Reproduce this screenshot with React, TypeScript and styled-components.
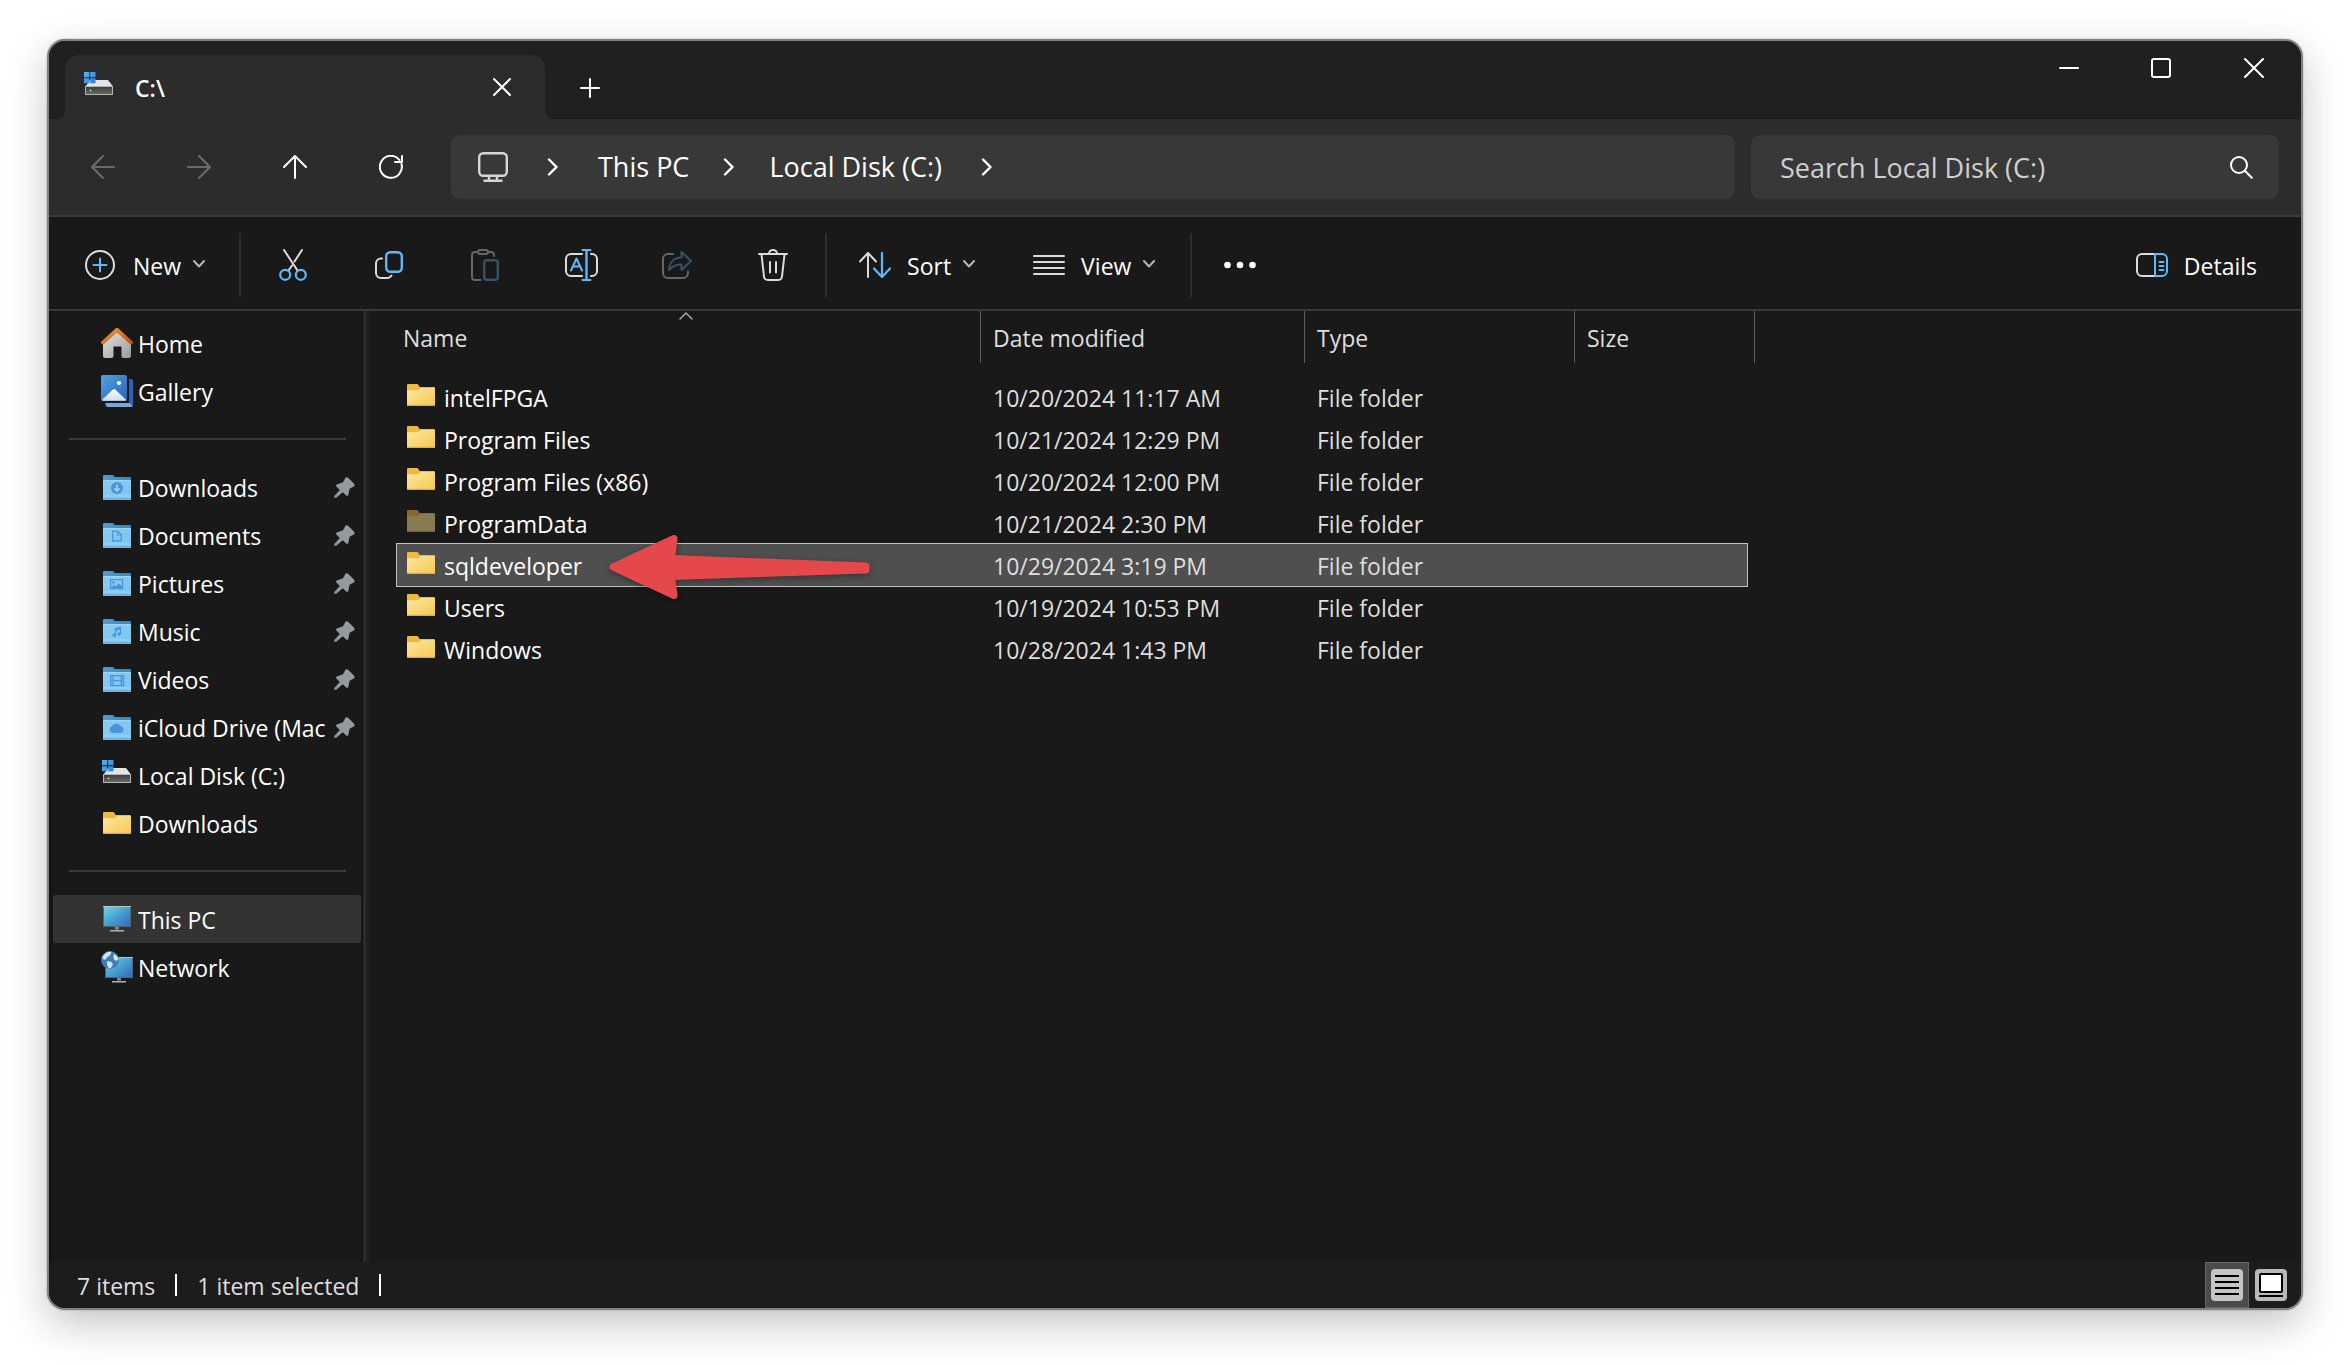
import React from "react";
import styled, { createGlobalStyle } from "styled-components";

const FONT = '"Open Sans", "Noto Sans", sans-serif';
const ACCENT = "#62b7f8";
const LINE = "#dcdcdc";

const GlobalStyle = createGlobalStyle`
  *, *::before, *::after { box-sizing: border-box; }
  body { margin: 0; background: #fff; font-family: ${FONT}; color: #fff; }
  button, input { font: inherit; color: inherit; background: none; border: 0; padding: 0; margin: 0; }
  a { color: inherit; text-decoration: none; }
  svg { display: block; flex: none; }
`;

const Page = styled.div`
  min-height: 100vh;
  display: flex;
  padding: 39px 47px 54px;
`;

const Window = styled.main`
  flex: 1;
  min-width: 0;
  display: flex;
  flex-direction: column;
  overflow: hidden;
  border: 2px solid #808080;
  border-radius: 18px;
  background: #191919;
  box-shadow: 0 0 2px rgba(0, 0, 0, 0.3), 0 14px 40px rgba(0, 0, 0, 0.23);
  font-size: 23px;
  line-height: 32px;
`;

const TitleBar = styled.header`
  display: flex;
  height: 78px;
  padding-left: 16px;
  background: #202020;
  border-bottom: 1px solid #1c1c1c;
`;

const Tab = styled.div`
  position: relative;
  display: flex;
  align-items: center;
  width: 480px;
  height: 64px;
  margin-top: 14px;
  padding: 0 34px 0 19px;
  border-radius: 14px 14px 0 0;
  background: #2c2c2c;

  &::before, &::after {
    content: "";
    position: absolute;
    bottom: 0;
    width: 8px;
    height: 8px;
  }
  &::before { left: -8px; background: radial-gradient(circle at 0 0, #202020 8px, #2c2c2c 8px); }
  &::after { right: -8px; background: radial-gradient(circle at 100% 0, #202020 8px, #2c2c2c 8px); }
`;

const TabTitle = styled.span`
  flex: 1;
  padding: 2px 0 0 21px;
  font-weight: 600;
`;

const IconButton = styled.button<{ $w: number }>`
  display: flex;
  align-items: center;
  justify-content: center;
  width: ${(p) => p.$w}px;
  color: ${LINE};
  &:disabled { color: #6b6b6b; }
`;

const NewTabButton = styled(IconButton)`
  height: 64px;
  margin: 15px 0 0 12px;
`;

const WindowControls = styled.div`
  display: flex;
  height: 54px;
  margin-left: auto;
  color: #fff;
`;

const NavBar = styled.nav`
  display: flex;
  align-items: center;
  height: 98px;
  padding: 0 22px 0 6px;
  background: #2c2c2c;
  border-bottom: 2px solid #3a3a3a;
`;

const NavButtons = styled.div`
  display: flex;
  height: 64px;
`;

const AddressBar = styled.div`
  flex: 1;
  display: flex;
  align-items: center;
  height: 64px;
  margin: 0 16px 0 12px;
  padding-left: 27px;
  border-radius: 9px;
  background: #383838;
  font-size: 27px;
`;

const Crumb = styled.a`
  white-space: nowrap;
`;

const CrumbArrow = styled.span<{ $wide?: boolean }>`
  display: flex;
  justify-content: center;
  width: ${(p) => (p.$wide ? 90 : 80)}px;
`;

const SearchBox = styled.label`
  display: flex;
  align-items: center;
  flex: 0 1 528px;
  height: 64px;
  padding: 0 26px 0 29px;
  border-radius: 9px;
  background: #383838;
  font-size: 27px;
`;

const SearchInput = styled.input`
  flex: 1;
  min-width: 0;
  height: 48px;
  outline: 0;
  &::placeholder { color: #cfcfcf; opacity: 1; }
`;

const Toolbar = styled.div`
  display: flex;
  align-items: center;
  height: 94px;
  padding: 4px 44px 0 36px;
  border-bottom: 2px solid #3a3a3a;
`;

const MenuButton = styled.button`
  display: flex;
  align-items: center;
  height: 64px;
`;

const ViewMenu = styled(MenuButton)`
  margin-left: 58px;
`;

const MenuLabel = styled.span<{ $left: number; $right?: number }>`
  padding: 2px ${(p) => p.$right ?? 0}px 0 ${(p) => p.$left}px;
`;

const ToolSeparator = styled.span<{ $left: number; $right: number }>`
  width: 2px;
  height: 64px;
  margin: 0 ${(p) => p.$right}px 0 ${(p) => p.$left}px;
  background: #2d2d2d;
`;

const Spacer = styled.span`
  flex: 1;
`;

const Content = styled.div`
  flex: 1;
  display: flex;
  min-height: 0;
`;

const Sidebar = styled.aside`
  flex: none;
  width: 317px;
  padding-top: 8px;
  border-left: 4px solid #151515;
  border-right: 3px solid #2b2b2b;
  box-shadow: inset -2px 0 0 #141414, 3px 0 0 #1f1f1f;
`;

const Place = styled.a<{ $active?: boolean }>`
  display: flex;
  align-items: center;
  height: 48px;
  margin-right: 2px;
  padding: 0 6px 0 48px;
  border-radius: 2px;
  background: ${(p) => (p.$active ? "#333333" : "transparent")};
`;

const PlaceIcon = styled.span<{ $inset: number }>`
  display: flex;
  flex: none;
  width: 37px;
  padding-left: ${(p) => p.$inset}px;
`;

const PlaceName = styled.span`
  flex: 1;
  padding-top: 2px;
  overflow: hidden;
  white-space: nowrap;
`;

const PlaceRule = styled.hr`
  height: 2px;
  margin: 23px 17px 23px 16px;
  border: 0;
  background: #3a3a3a;
`;

const FilePane = styled.section`
  flex: 1;
  min-width: 0;
  padding-left: 31px;
`;

const FileTable = styled.table`
  display: block;
  thead, tbody { display: block; }
`;

const Row = styled.tr`
  display: grid;
  grid-template-columns: 584px 324px 270px 180px;
`;

const HeadRow = styled(Row)`
  margin-bottom: 13px;
`;

const HeadCell = styled.th`
  position: relative;
  height: 52px;
  padding: 11px 12px 0;
  border-right: 1px solid #5c5c5c;
  color: #dedede;
  font-weight: 400;
  text-align: left;
  &:first-child { padding-left: 6px; }
`;

const SortMark = styled.span`
  position: absolute;
  top: 1px;
  left: 282px;
`;

const FileRow = styled(Row)<{ $selected?: boolean }>`
  position: relative;
  width: 1350px;
  height: 42px;
  background: ${(p) => (p.$selected ? "#4f4f4f" : "transparent")};
  outline: ${(p) => (p.$selected ? "1px solid #c3c3c3" : "0")};
`;

const Cell = styled.td`
  padding: 6px 12px 0;
  color: #dedede;
  white-space: nowrap;
`;

const NameCell = styled(Cell)`
  display: flex;
  gap: 9px;
  padding-left: 10px;
  color: #fff;
  > svg { margin-top: 2px; }
`;

const Pointer = styled.span`
  position: absolute;
  left: 210px;
  top: -11px;
  filter: drop-shadow(0 2px 3px rgba(0, 0, 0, 0.35));
`;

const StatusBar = styled.footer`
  display: flex;
  align-items: center;
  height: 46px;
  padding: 0 8px 0 28px;
  background: #1c1c1c;
  color: #dedede;
`;

const StatusText = styled.span`
  padding-top: 2px;
`;

const StatusRule = styled.span`
  width: 2px;
  height: 22px;
  margin: 0 20px;
  background: #fff;
`;

const ViewButton = styled.button<{ $on?: boolean }>`
  display: flex;
  align-items: center;
  justify-content: center;
  width: 44px;
  height: 46px;
  border: 1px solid ${(p) => (p.$on ? "#666666" : "transparent")};
  background: ${(p) => (p.$on ? "#4b4b4b" : "transparent")};
`;

/* ---------- icons ---------- */

type StrokeProps = { w: number; h: number; sw?: number; color?: string; children: React.ReactNode };
const Stroke = ({ w, h, sw = 2, color = "currentColor", children }: StrokeProps) => (
  <svg width={w} height={h} viewBox={`0 0 ${w} ${h}`} fill="none" stroke={color} strokeWidth={sw} strokeLinecap="round" strokeLinejoin="round" aria-hidden="true">
    {children}
  </svg>
);

const Chevron = () => <Stroke w={12} h={10} sw={2} color="#b5b5b5"><path d="M1 1l5 5.500 5-5.500" /></Stroke>;
const CrumbChevron = () => <Stroke w={12} h={18} sw={2.4} color="#fff"><path d="M2 1.500l7.500 7.500L2 16.500" /></Stroke>;

const DriveIcon = () => (
  <svg width="30" height="30" viewBox="0 0 30 30" aria-hidden="true">
    <defs>
      <linearGradient id="driveFront" x1="0" y1="0" x2="0" y2="1">
        <stop offset="0" stopColor="#3b3b3b" /><stop offset="1" stopColor="#6a6a6a" />
      </linearGradient>
      <linearGradient id="driveLogo" x1="0" y1="0" x2="1" y2="1">
        <stop offset="0" stopColor="#5cb4f0" /><stop offset="1" stopColor="#2f7bd4" />
      </linearGradient>
    </defs>
    <path d="M6 8h18l5 6.500H1.500z" fill="#e3e4e8" />
    <rect x="1.500" y="14.500" width="27" height="8" fill="url(#driveFront)" stroke="#b4b4b4" />
    <path d="M6.500 17v3M5 18.500h3" stroke="#3fae2a" strokeWidth="1" />
    <rect x="6" y="18" width="1" height="1" fill="#8ff56a" />
    <path d="M0 0h5.300v5.300H0zM6.200 0h5.300v5.300H6.200zM0 6.200h5.300v5H0zM6.200 6.200h5.300v5H6.200z" fill="url(#driveLogo)" />
  </svg>
);

const FolderIcon = ({ faded }: { faded?: boolean }) => (
  <svg width="28" height="22" viewBox="0 0 28 22" opacity={faded ? 0.5 : 1} aria-hidden="true">
    <defs>
      <linearGradient id="folderFace" x1="0" y1="0" x2="1" y2="1">
        <stop offset="0" stopColor="#fde8a4" /><stop offset="1" stopColor="#f5c84f" />
      </linearGradient>
    </defs>
    <path d="M0 1a1 1 0 0 1 1-1h8.500c1 0 1.500.5 2 1.200L12.700 3H27a1 1 0 0 1 1 1v10H0z" fill="#efb93f" />
    <path d="M0 6.200h10c1 0 1.700-.3 2.400-1l1-.9c.4-.3.700-.3 1.100-.3H28v17a1 1 0 0 1-1 1H1a1 1 0 0 1-1-1z" fill={faded ? "#f7dc8c" : "url(#folderFace)"} />
    <path d="M.3 21.300h27.400" stroke="#d9a53a" strokeWidth="1" />
  </svg>
);

const BlueFolder = ({ children }: { children: React.ReactNode }) => (
  <svg width="28" height="25" viewBox="0 0 28 25" aria-hidden="true">
    <defs>
      <linearGradient id="blueFace" x1="0" y1="0" x2="1" y2="1">
        <stop offset="0" stopColor="#8accf3" /><stop offset="1" stopColor="#7cc3ee" />
      </linearGradient>
      <linearGradient id="blueBack" x1="0" y1="0" x2="1" y2="0">
        <stop offset="0" stopColor="#4b9dd2" /><stop offset="1" stopColor="#3b82bd" />
      </linearGradient>
    </defs>
    <path d="M0 1a1 1 0 0 1 1-1h8c1 0 1.500.5 2 1l.8 1H27a1 1 0 0 1 1 1v8H0z" fill="url(#blueBack)" />
    <path d="M0 5h28v19a1 1 0 0 1-1 1H1a1 1 0 0 1-1-1z" fill="url(#blueFace)" />
    <path d="M0 5.500h28" stroke="#9bd7f8" />
    <path d="M0 21h28" stroke="#9ad3f3" strokeWidth="1.500" />
    <path d="M0 24h28" stroke="#62b0dd" strokeWidth="1.500" />
    {children}
  </svg>
);

const GLYPH = "#4a94d8";
const DownloadsFolder = () => (
  <BlueFolder><circle cx="14" cy="13" r="6" fill={GLYPH} /><path d="M14 9.500v6M11.300 13.200l2.700 2.700 2.700-2.700" fill="none" stroke="#9bd7f8" strokeWidth="1.600" /></BlueFolder>
);
const DocumentsFolder = () => (
  <BlueFolder><path d="M9.700 8.200h5.100l3.500 3.500v6.100H9.700zM14.500 8.200v3.800h3.800" fill="none" stroke={GLYPH} strokeWidth="1.200" /></BlueFolder>
);
const PicturesFolder = () => (
  <BlueFolder><rect x="7.600" y="8.600" width="12" height="9" fill="none" stroke={GLYPH} strokeWidth="1.200" /><circle cx="10.500" cy="11.300" r="1.300" fill={GLYPH} /><path d="M8 17l3-3.200 2 1.800 3-3.200 3.600 3.600v1.600H8z" fill={GLYPH} /></BlueFolder>
);
const MusicFolder = () => (
  <BlueFolder><path d="M12.500 16.200V9.800l5-1.400v6.400M12.500 11l5-1.400" fill="none" stroke={GLYPH} strokeWidth="1.300" /><circle cx="11.200" cy="16.300" r="1.700" fill={GLYPH} /><circle cx="16.200" cy="15" r="1.700" fill={GLYPH} /></BlueFolder>
);
const VideosFolder = () => (
  <BlueFolder><path d="M7.600 8.600h13v10h-13zM10 8.600v10M18.200 8.600v10M10 13.600h8.200" fill="none" stroke={GLYPH} strokeWidth="1.200" /><path d="M8.800 8.600v10M19.400 8.600v10" stroke={GLYPH} strokeDasharray="1 1" /></BlueFolder>
);
const CloudFolder = () => (
  <BlueFolder><path d="M9.500 18a3.400 3.400 0 0 1-.6-6.600 4.700 4.700 0 0 1 8.600-.4 3.600 3.600 0 0 1 .3 7z" fill={GLYPH} /></BlueFolder>
);

const HomeIcon = () => (
  <svg width="32" height="30" viewBox="0 0 32 30" aria-hidden="true">
    <defs>
      <linearGradient id="homeWall" x1="0" y1="0" x2="1" y2="1"><stop offset="0" stopColor="#e4e4e4" /><stop offset="1" stopColor="#9a9a9a" /></linearGradient>
      <linearGradient id="homeRoof" x1="0" y1="0" x2="1" y2="1"><stop offset="0" stopColor="#f0a23a" /><stop offset="1" stopColor="#c2461c" /></linearGradient>
    </defs>
    <path d="M16 3.500L30 16v11.500a2.500 2.500 0 0 1-2.500 2.500h-5a2 2 0 0 1-2-2V18.500h-8V28a2 2 0 0 1-2 2h-6A2.500 2.500 0 0 1 2 27.500V16z" fill="url(#homeWall)" />
    <path d="M14.200.7a2.600 2.600 0 0 1 3.600 0L31.600 13.500a1.400 1.400 0 0 1 0 2l-.6.600a1.400 1.400 0 0 1-2 0L16 4.600 3 16.100a1.400 1.400 0 0 1-2 0l-.6-.6a1.400 1.400 0 0 1 0-2z" fill="url(#homeRoof)" />
  </svg>
);

const GalleryIcon = () => (
  <svg width="32" height="32" viewBox="0 0 32 32" aria-hidden="true">
    <defs>
      <linearGradient id="galleryFront" x1="0" y1="0" x2="1" y2="1"><stop offset="0" stopColor="#4fa3e2" /><stop offset="1" stopColor="#2a62b8" /></linearGradient>
      <linearGradient id="galleryHill" x1="0" y1="0" x2="0" y2="1"><stop offset="0" stopColor="#fff" /><stop offset="1" stopColor="#c9ddf5" /></linearGradient>
    </defs>
    <path d="M28 4h2a2 2 0 0 1 2 2v24a2 2 0 0 1-2 2H6a2 2 0 0 1-2-2v-2h24z" fill="#2c63b5" />
    <path d="M4.500 28h24l3 3.300c-.4.400-.9.700-1.500.7H6.500z" fill="#7fa5d8" />
    <rect x="-1" y="-1" width="29" height="29" rx="2" fill="#191919" />
    <rect width="26" height="26" rx="2" fill="url(#galleryFront)" />
    <path d="M1 25l10.600-10.300c1-1 2-1 3 0L25.200 25l-.8.800H2z" fill="url(#galleryHill)" />
    <circle cx="18" cy="8" r="2.100" fill="#fff" />
  </svg>
);

const MonitorIcon = () => (
  <svg width="28" height="26" viewBox="0 0 28 26" aria-hidden="true">
    <defs><linearGradient id="screen" x1="0" y1="0" x2="1" y2="1"><stop offset="0" stopColor="#6fdbe2" /><stop offset=".5" stopColor="#489fd2" /><stop offset="1" stopColor="#2f68b8" /></linearGradient></defs>
    <rect x=".5" y=".5" width="27" height="20" fill="url(#screen)" stroke="#4d6678" />
    <path d="M0 .5h28" stroke="#b9c6cc" />
    <path d="M12 21h4v2.500h-4z" fill="#7d8a91" />
    <path d="M7 24h14v1.500H7z" fill="#aab3b8" />
  </svg>
);

const NetworkIcon = () => (
  <svg width="32" height="32" viewBox="0 0 32 32" aria-hidden="true">
    <rect x="4.500" y="6.500" width="27" height="20" fill="url(#screen)" stroke="#4d6678" />
    <path d="M4 6.500h28" stroke="#b9c6cc" />
    <path d="M16 27h4v2.500h-4z" fill="#7d8a91" />
    <path d="M11 30h14v1.500H11z" fill="#aab3b8" />
    <circle cx="9" cy="9" r="9" fill="#3f7fb0" />
    <path d="M2 5c2-3 5-4.500 8-4.200 1 .9-.6 1.700-1 3.200-.5 1.400-2 1.300-3 2.500S4.800 9 3 8.600 1.500 6.500 2 5zM6 10.500c2-.7 4.600.2 5.500 2s-.8 3.500-2.500 5C6.500 17 5.800 12.500 6 10.500zM13 3c2 .4 4 3 4.500 5.500-1 1.500-3 1.500-4 .5S12 4 13 3z" fill="#cfe6f0" />
  </svg>
);

const PinIcon = () => (
  <svg width="21" height="21" viewBox="0 0 21 21" aria-hidden="true">
    <path d="M11.300 1c.8-1 1.900-1.100 2.800-.2l6 6c.9.900.7 2-.3 2.600l-4.200 2.400-1.300 6.200c-.3 1.100-1.300 1.400-2.100.6l-3.400-3.400L2.200 20.800H.3v-1.900L5.800 13 2.400 9.500c-.8-.8-.6-1.700.5-2.100L9 5.200z" fill="#939a9f" />
  </svg>
);

/* ---------- data ---------- */

type PlaceItem = { name: string; icon: React.ReactNode; inset: number; pinned?: boolean; active?: boolean };

const places: (PlaceItem | null)[] = [
  { name: "Home", icon: <HomeIcon />, inset: 0 },
  { name: "Gallery", icon: <GalleryIcon />, inset: 0 },
  null,
  { name: "Downloads", icon: <DownloadsFolder />, inset: 2, pinned: true },
  { name: "Documents", icon: <DocumentsFolder />, inset: 2, pinned: true },
  { name: "Pictures", icon: <PicturesFolder />, inset: 2, pinned: true },
  { name: "Music", icon: <MusicFolder />, inset: 2, pinned: true },
  { name: "Videos", icon: <VideosFolder />, inset: 2, pinned: true },
  { name: "iCloud Drive (Mac", icon: <CloudFolder />, inset: 2, pinned: true },
  { name: "Local Disk (C:)", icon: <DriveIcon />, inset: 1 },
  { name: "Downloads", icon: <FolderIcon />, inset: 2 },
  null,
  { name: "This PC", icon: <MonitorIcon />, inset: 2, active: true },
  { name: "Network", icon: <NetworkIcon />, inset: 0 },
];

const files = [
  { name: "intelFPGA", date: "10/20/2024 11:17 AM" },
  { name: "Program Files", date: "10/21/2024 12:29 PM" },
  { name: "Program Files (x86)", date: "10/20/2024 12:00 PM" },
  { name: "ProgramData", date: "10/21/2024 2:30 PM", hidden: true },
  { name: "sqldeveloper", date: "10/29/2024 3:19 PM", selected: true },
  { name: "Users", date: "10/19/2024 10:53 PM" },
  { name: "Windows", date: "10/28/2024 1:43 PM" },
];

export default function App() {
  return (
    <>
      <GlobalStyle />
      <Page>
        <Window>
          <TitleBar>
            <Tab>
              <DriveIcon />
              <TabTitle>C:\</TabTitle>
              <IconButton $w={18} aria-label="Close tab">
                <Stroke w={18} h={18} color="#fff"><path d="M1 1l16 16M17 1L1 17" /></Stroke>
              </IconButton>
            </Tab>
            <NewTabButton $w={66} aria-label="New tab">
              <Stroke w={20} h={20} color="#fff"><path d="M10 1v18M1 10h18" /></Stroke>
            </NewTabButton>
            <WindowControls>
              <IconButton $w={92} aria-label="Minimize"><Stroke w={20} h={20} color="#fff"><path d="M1 10h18" /></Stroke></IconButton>
              <IconButton $w={92} aria-label="Maximize"><Stroke w={20} h={20} color="#fff"><rect x="1" y="1" width="18" height="18" rx="2" /></Stroke></IconButton>
              <IconButton $w={94} aria-label="Close"><Stroke w={20} h={20} color="#fff"><path d="M1 1l18 18M19 1L1 19" /></Stroke></IconButton>
            </WindowControls>
          </TitleBar>

          <NavBar aria-label="Navigation">
            <NavButtons>
              <IconButton $w={96} disabled aria-label="Back"><Stroke w={24} h={24}><path d="M23 12H1M12 1L1 12l11 11" /></Stroke></IconButton>
              <IconButton $w={96} disabled aria-label="Forward"><Stroke w={24} h={24}><path d="M1 12h22M12 1l11 11-11 11" /></Stroke></IconButton>
              <IconButton $w={96} aria-label="Up"><Stroke w={24} h={24} color="#fff"><path d="M12 23V1M1 12L12 1l11 11" /></Stroke></IconButton>
              <IconButton $w={96} aria-label="Refresh"><Stroke w={24} h={24} color="#fff"><path d="M22.500 9A11 11 0 1 1 20.500 5M23 1v6h-7" transform="translate(0 0)" /></Stroke></IconButton>
            </NavButtons>
            <AddressBar>
              <Stroke w={30} h={30} sw={2.4} color="#d6d6d6">
                <rect x="1.200" y="1.200" width="27.600" height="22.600" rx="4" /><path d="M11 24v4.500M19 24v4.500M6.500 28.700h17" />
              </Stroke>
              <CrumbArrow $wide><CrumbChevron /></CrumbArrow>
              <Crumb href="#pc">This PC</Crumb>
              <CrumbArrow><CrumbChevron /></CrumbArrow>
              <Crumb href="#c">Local Disk (C:)</Crumb>
              <CrumbArrow $wide><CrumbChevron /></CrumbArrow>
            </AddressBar>
            <SearchBox>
              <SearchInput type="text" aria-label="Search Local Disk (C:)" placeholder="Search Local Disk (C:)" />
              <Stroke w={23} h={23} color="#fff"><circle cx="9" cy="9" r="8" /><path d="M14.800 14.800l7 7" /></Stroke>
            </SearchBox>
          </NavBar>

          <Toolbar>
            <MenuButton>
              <Stroke w={30} h={30} color={LINE}><circle cx="15" cy="15" r="14" /><path d="M15 8.500v13M8.500 15h13" stroke={ACCENT} /></Stroke>
              <MenuLabel $left={18} $right={12}>New</MenuLabel>
              <Chevron />
            </MenuButton>
            <ToolSeparator $left={34} $right={4} />
            <IconButton $w={96} aria-label="Cut">
              <Stroke w={28} h={32} color={LINE}>
                <path d="M5 1l13.500 20.500M23 1l-7.500 11.500M13 16.500l-3.500 5" /><g stroke={ACCENT} strokeWidth="2.200"><circle cx="6.200" cy="25.800" r="5" /><circle cx="21.800" cy="25.800" r="5" /></g>
              </Stroke>
            </IconButton>
            <IconButton $w={96} aria-label="Copy">
              <Stroke w={28} h={28} color={LINE}>
                <path d="M7 7.500H6a5 5 0 0 0-5 5V22a5 5 0 0 0 5 5h6.500a5 5 0 0 0 4-2.500" /><rect x="11.200" y="1.200" width="15.600" height="19.600" rx="4" stroke={ACCENT} strokeWidth="2.400" />
              </Stroke>
            </IconButton>
            <IconButton $w={96} disabled aria-label="Paste">
              <Stroke w={28} h={32} color="#666">
                <path d="M6.500 3H4a3 3 0 0 0-3 3v22a3 3 0 0 0 3 3h5.500M17.500 3H20a3 3 0 0 1 3 3v1" /><rect x="7" y="1" width="10" height="4" rx="2" /><rect x="13.200" y="11.200" width="13.600" height="19.600" rx="2.500" stroke="#355268" strokeWidth="2.400" />
              </Stroke>
            </IconButton>
            <IconButton $w={96} aria-label="Rename">
              <Stroke w={33} h={32} color={LINE}>
                <path d="M17 5H6a5 5 0 0 0-5 5v12a5 5 0 0 0 5 5h11M26 5h1a5 5 0 0 1 5 5v12a5 5 0 0 1-5 5h-1" /><g stroke={ACCENT}><path d="M17.500 1h8M17.500 31h8M6 21.500L11.500 9.500l5.500 12M8 17.500h7" /><path d="M21.500 1v30" strokeWidth="2.400" /></g>
              </Stroke>
            </IconButton>
            <IconButton $w={96} disabled aria-label="Share">
              <Stroke w={30} h={28} color="#666">
                <path d="M11 3H6a5 5 0 0 0-5 5v14a5 5 0 0 0 5 5h15a5 5 0 0 0 5-5v-1.500" /><path d="M19.500 1l9.500 9-9.500 9v-5.500c-5 0-9 1.500-12.500 5.500.5-7.500 5-12.500 12.500-12.500z" stroke="#355268" />
              </Stroke>
            </IconButton>
            <IconButton $w={96} aria-label="Delete">
              <Stroke w={30} h={32} color={LINE}>
                <path d="M1 5h28M11 4.500a4 3.500 0 0 1 8 0M3.500 5.500l2.500 22a4 4 0 0 0 4 3.500h10a4 4 0 0 0 4-3.500l2.500-22M12 13v10.500M18 13v10.500" />
              </Stroke>
            </IconButton>
            <ToolSeparator $left={4} $right={32} />
            <MenuButton>
              <Stroke w={32} h={26} color={LINE}><path d="M9 25V1M1 9.500L9 1l8 8.500" /><path d="M23 1v24M15 16.500L23 25l8-8.500" stroke={ACCENT} strokeWidth="2.200" /></Stroke>
              <MenuLabel $left={16} $right={12}>Sort</MenuLabel>
              <Chevron />
            </MenuButton>
            <ViewMenu>
              <Stroke w={32} h={20} color={LINE}><path d="M1 1h30M1 7h30M1 13h30M1 19h30" /></Stroke>
              <MenuLabel $left={16} $right={12}>View</MenuLabel>
              <Chevron />
            </ViewMenu>
            <ToolSeparator $left={35} $right={20} />
            <IconButton $w={56} aria-label="See more">
              <svg width="32" height="8" viewBox="0 0 32 8" fill="#fff" aria-hidden="true"><circle cx="3.500" cy="4" r="3.300" /><circle cx="16" cy="4" r="3.300" /><circle cx="28.500" cy="4" r="3.300" /></svg>
            </IconButton>
            <Spacer />
            <MenuButton>
              <Stroke w={32} h={24} color={LINE}>
                <path d="M18 1H6a5 5 0 0 0-5 5v12a5 5 0 0 0 5 5h12" /><path d="M19 1h7a5 5 0 0 1 5 5v12a5 5 0 0 1-5 5h-7zM23.500 9h4M23.500 13h4M23.500 17h4" stroke={ACCENT} />
              </Stroke>
              <MenuLabel $left={16}>Details</MenuLabel>
            </MenuButton>
          </Toolbar>

          <Content>
            <Sidebar aria-label="Places">
              {places.map((p, i) =>
                p ? (
                  <Place key={i} href="#place" $active={p.active}>
                    <PlaceIcon $inset={p.inset}>{p.icon}</PlaceIcon>
                    <PlaceName>{p.name}</PlaceName>
                    {p.pinned && <PinIcon />}
                  </Place>
                ) : (
                  <PlaceRule key={i} />
                )
              )}
            </Sidebar>

            <FilePane>
              <FileTable>
                <thead>
                  <HeadRow>
                    <HeadCell scope="col" aria-sort="ascending">
                      Name
                      <SortMark><Stroke w={14} h={8} sw={1.4} color="#b0b0b0"><path d="M1 7l6-6 6 6" /></Stroke></SortMark>
                    </HeadCell>
                    <HeadCell scope="col">Date modified</HeadCell>
                    <HeadCell scope="col">Type</HeadCell>
                    <HeadCell scope="col">Size</HeadCell>
                  </HeadRow>
                </thead>
                <tbody>
                  {files.map((f) => (
                    <FileRow key={f.name} $selected={f.selected}>
                      <NameCell>
                        <FolderIcon faded={f.hidden} />
                        {f.name}
                        {f.selected && (
                          <Pointer>
                            <svg width="264" height="68" viewBox="0 0 264 68" aria-hidden="true">
                              <path d="M6 34L67 5.500l-2.500 20L259 33v4L64.500 43.500l2.500 19z" fill="#e5484b" stroke="#e5484b" strokeWidth="7" strokeLinejoin="round" />
                            </svg>
                          </Pointer>
                        )}
                      </NameCell>
                      <Cell>{f.date}</Cell>
                      <Cell>File folder</Cell>
                      <Cell />
                    </FileRow>
                  ))}
                </tbody>
              </FileTable>
            </FilePane>
          </Content>

          <StatusBar>
            <StatusText>7 items</StatusText>
            <StatusRule />
            <StatusText>1 item selected</StatusText>
            <StatusRule />
            <Spacer />
            <ViewButton $on aria-label="Details view">
              <svg width="32" height="32" viewBox="0 0 32 32" aria-hidden="true">
                <rect width="32" height="32" rx="4" fill="#c4c4c4" />
                <path d="M4 7h24M4 13h24M4 19h24M4 25h24" stroke="#000" strokeWidth="2" />
              </svg>
            </ViewButton>
            <ViewButton aria-label="Large icons view">
              <svg width="32" height="32" viewBox="0 0 32 32" aria-hidden="true">
                <rect width="32" height="32" rx="4" fill="#b9b9b9" />
                <rect x="5" y="5" width="22" height="18" rx="1" fill="#fff" stroke="#000" strokeWidth="2" />
                <path d="M4 27h24" stroke="#000" strokeWidth="2" />
              </svg>
            </ViewButton>
          </StatusBar>
        </Window>
      </Page>
    </>
  );
}
